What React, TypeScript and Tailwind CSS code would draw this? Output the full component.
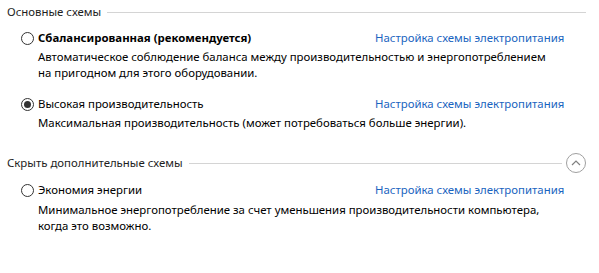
import React from "react";

const font = { fontFamily: '"Noto Sans", "Open Sans", sans-serif' };

function Radio({ checked }: { checked?: boolean }) {
  return (
    <div className="w-[13px] h-[13px] rounded-full border border-[#333333] bg-white flex items-center justify-center shrink-0">
      {checked && <div className="w-[7px] h-[7px] rounded-full bg-[#333333]" />}
    </div>
  );
}

function Header({ text, chevron }: { text: string; chevron?: boolean }) {
  return (
    <div className="flex items-center h-[16px] pl-[7px] pr-[13px]">
      <span className="text-[11.4px] leading-[16px] text-[#1e1e1e] whitespace-nowrap">{text}</span>
      <div className="flex-1 h-px bg-[#d4d4d4] ml-[6px]" />
      {chevron && (
        <div className="w-[20px] h-[20px] rounded-full border border-[#a0a0a0] flex items-center justify-center ml-[4px] shrink-0">
          <svg width="10" height="6" viewBox="0 0 10 6">
            <path d="M1 5 L5 1 L9 5" fill="none" stroke="#808080" strokeWidth="1.2" />
          </svg>
        </div>
      )}
    </div>
  );
}

function Scheme({
  title,
  bold,
  checked,
  desc,
  descMt,
}: {
  title: string;
  bold?: boolean;
  checked?: boolean;
  desc: string[];
  descMt: string;
}) {
  return (
    <div className="flex flex-col">
      <div className="flex items-center h-[16px] pl-[21px]">
        <Radio checked={checked} />
        <span
          className={`ml-[4px] text-[11.4px] leading-[16px] text-[#000000] w-[337px] whitespace-nowrap ${
            bold ? "font-bold" : ""
          }`}
        >
          {title}
        </span>
        <span className="text-[11.4px] leading-[16px] text-[#1a64c0] whitespace-nowrap">
          Настройка схемы электропитания
        </span>
      </div>
      <div className={`pl-[38px] ${descMt}`}>
        {desc.map((d, i) => (
          <div key={i} className="text-[11.4px] leading-[16px] text-[#000000] whitespace-nowrap">
            {d}
          </div>
        ))}
      </div>
    </div>
  );
}

export default function App() {
  return (
    <div className="w-[599px] h-[273px] bg-white overflow-hidden" style={font}>
      <div className="pt-[4px]">
        <Header text="Основные схемы" />
        <div className="mt-[10px]">
          <Scheme
            title="Сбалансированная (рекомендуется)"
            bold
            desc={[
              "Автоматическое соблюдение баланса между производительностью и энергопотреблением",
              "на пригодном для этого оборудовании.",
            ]}
            descMt="mt-[3px]"
          />
        </div>
        <div className="mt-[15px]">
          <Scheme
            title="Высокая производительность"
            checked
            desc={["Максимальная производительность (может потребоваться больше энергии)."]}
            descMt="mt-[3px]"
          />
        </div>
        <div className="mt-[24px]">
          <Header text="Скрыть дополнительные схемы" chevron />
        </div>
        <div className="mt-[11px]">
          <Scheme
            title="Экономия энергии"
            desc={[
              "Минимальное энергопотребление за счет уменьшения производительности компьютера,",
              "когда это возможно.",
            ]}
            descMt="mt-[4px]"
          />
        </div>
      </div>
    </div>
  );
}
